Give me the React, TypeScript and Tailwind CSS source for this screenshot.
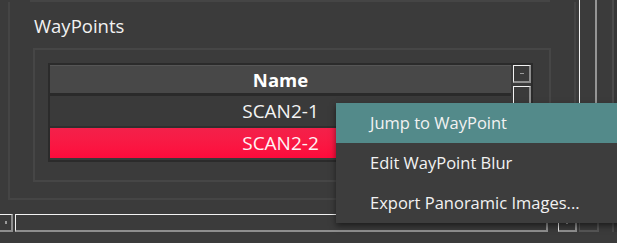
import React from "react";

function ScrollButton({ className, vertical }: { className: string; vertical?: boolean }) {
  return (
    <div className={`flex items-center justify-center border-t border-l border-t-[#f2f2f2] border-l-[#f2f2f2] border-b-2 border-r-2 border-b-[#8e8e8e] border-r-[#8e8e8e] ${className}`}>
      {vertical ? <div className="h-[1px] w-[4px] bg-[#9a9a9a]" /> : <div className="h-[3px] w-[2px] bg-[#9a9a9a]" />}
    </div>
  );
}

function WayPointTable() {
  return (
    <div className="ml-[13px] mt-[13px] flex h-[99px] w-[485px] border-2 border-[#2b2b2b] bg-[#3a3a3a]">
      <div className="flex w-[461px] flex-col">
        <div className="flex h-[28px] items-center justify-center border-t border-[#565656] bg-[#484848] text-[18.5px] font-bold text-white">
          Name
        </div>
        <div className="h-[3px] bg-[#2a2a2a]" />
        <div className="flex h-[30px] items-center justify-center text-[19px] text-[#f4f4f4]">SCAN2-1</div>
        <div className="h-[2px] bg-[#2f2f2f]" />
        <div className="flex h-[30px] items-center justify-center bg-gradient-to-b from-[#f3214a] to-[#ff0a3c] text-[19px] text-[#fff2f4]">
          SCAN2-2
        </div>
      </div>
      <div className="ml-[2px] flex w-[18px] flex-col">
        <ScrollButton vertical className="h-[18px] w-[18px]" />
        <div className="mt-[3px] flex-1 border-t border-l border-t-[#f2f2f2] border-l-[#f2f2f2] border-r-2 border-r-[#8e8e8e]" />
      </div>
    </div>
  );
}

function ContextMenu() {
  const items = ["Jump to WayPoint", "Edit WayPoint Blur", "Export Panoramic Images..."];
  return (
    <div className="absolute left-[336px] top-[103px] w-[290px] bg-[#3d3d3d] shadow-[0_3px_6px_rgba(0,0,0,0.5)]">
      {items.map((label, i) => (
        <div
          key={label}
          className={`h-[40px] pl-[34px] text-[16.5px] leading-[40px] text-[#f2f2f2] ${i === 0 ? "bg-[#538a8a]" : ""}`}
        >
          {label}
        </div>
      ))}
    </div>
  );
}

export default function App() {
  return (
    <div className="relative h-[243px] w-[617px] overflow-hidden bg-[#3b3b3b] font-['Open_Sans','Noto_Sans',sans-serif]">
      <div className="flex h-[214px]">
        <div className="flex w-[579px] flex-col">
          <div className="ml-[30px] h-[2px] w-[520px] bg-[#454545]" />
          <div className="ml-[8px] h-[198px] w-[568px] border-x-2 border-b-2 border-[#454545]">
            <div className="ml-[24px] mt-[10px] h-[28px] text-[18.5px] leading-[28px] text-[#f2f2f2]">WayPoints</div>
            <div className="ml-[23px] mt-[8px] h-[134px] w-[518px] border-2 border-[#464646]">
              <WayPointTable />
            </div>
          </div>
        </div>
        <div className="w-[18px] border-l border-l-[#f2f2f2] border-r-2 border-b-2 border-r-[#959595] border-b-[#959595]" />
        <div className="flex w-[20px]">
          <div className="ml-[15px] w-[2px] bg-[#4a4a4a]" />
          <div className="flex-1 bg-[#363636]" />
        </div>
      </div>
      <div className="flex h-[18px]">
        <ScrollButton className="h-[18px] w-[13px] border-l-0" />
        <div className="ml-[2px] h-[18px] w-[533px] border-t border-l border-t-[#f2f2f2] border-l-[#f2f2f2] border-b-2 border-r-2 border-b-[#8e8e8e] border-r-[#8e8e8e]" />
        <ScrollButton className="ml-[10px] h-[18px] w-[19px]" />
        <div className="ml-[2px] h-[18px] w-[20px] border-l border-b-2 border-r-2 border-[#555555]" />
        <div className="ml-[13px] w-[2px] bg-[#4a4a4a]" />
        <div className="flex-1 bg-[#363636]" />
      </div>
      <ContextMenu />
    </div>
  );
}
